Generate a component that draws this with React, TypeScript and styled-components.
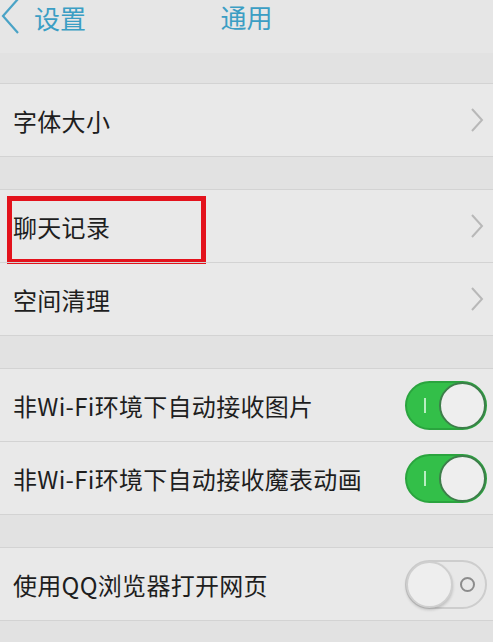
import React from "react";
import styled, { createGlobalStyle } from "styled-components";

const GlobalStyle = createGlobalStyle`
  html, body { margin: 0; padding: 0; background: #e2e2e2; }
  body { font-family: "Noto Sans CJK SC", "Noto Sans", "Liberation Sans", sans-serif; }
`;

const Page = styled.div`
  width: 493px;
  height: 642px;
  overflow: hidden;
  background: #e2e2e2;
  display: flex;
  flex-direction: column;
`;

const Header = styled.header`
  height: 53px;
  background: #e6e6e6;
  display: grid;
  grid-template-columns: 1fr auto 1fr;
  align-items: start;
  flex-shrink: 0;
`;

const BackButton = styled.div`
  display: flex;
  align-items: center;
  gap: 12px;
  color: #3b9ec4;
  font-size: 26px;
  line-height: 30px;
  padding-top: 2px;
`;

const Title = styled.div`
  color: #3b9ec4;
  font-size: 26px;
  line-height: 30px;
  padding-top: 2px;
`;

const Gap = styled.div<{ $h: number }>`
  height: ${(p) => p.$h}px;
  flex-shrink: 0;
`;

const Group = styled.section`
  background: #e9e9e9;
  border-top: 1px solid #d3d3d3;
  border-bottom: 1px solid #d3d3d3;
  display: flex;
  flex-direction: column;
  flex-shrink: 0;
`;

const Row = styled.div`
  position: relative;
  height: 72px;
  display: flex;
  align-items: center;
  justify-content: space-between;
  padding: 0 6px 0 13px;
  & + & {
    border-top: 1px solid #d3d3d3;
  }
`;

const Label = styled.span`
  font-size: 24px;
  color: #1e1e1e;
  letter-spacing: 0.3px;
  padding-top: 1px;
`;

const Highlight = styled.div`
  position: absolute;
  left: 7px;
  top: 6px;
  width: 189px;
  height: 58px;
  border: 5px solid #e3121c;
  pointer-events: none;
`;

const Track = styled.div<{ $on: boolean }>`
  position: relative;
  width: 82px;
  height: 49px;
  box-sizing: border-box;
  border-radius: 25px;
  background: ${(p) => (p.$on ? "#33bf49" : "#e8e8e8")};
  border: 2px solid ${(p) => (p.$on ? "#2aa43e" : "#cdcdcd")};
`;

const Knob = styled.div<{ $on: boolean }>`
  position: absolute;
  top: -1px;
  ${(p) => (p.$on ? "right: -1px;" : "left: -1px;")}
  width: 47px;
  height: 47px;
  box-sizing: border-box;
  border-radius: 50%;
  background: #eeeeee;
  border: 2px solid ${(p) => (p.$on ? "#3d7e4a" : "#cfcfcf")};
  box-shadow: ${(p) => (p.$on ? "none" : "0 2px 3px rgba(0,0,0,0.18)")};
`;

const OnMark = styled.div`
  position: absolute;
  left: 17px;
  top: 15px;
  width: 2px;
  height: 15px;
  background: #b9eec2;
`;

const OffMark = styled.div`
  position: absolute;
  right: 10px;
  top: 15px;
  width: 15px;
  height: 15px;
  box-sizing: border-box;
  border-radius: 50%;
  border: 2px solid #8c8c8c;
`;

const Chevron = () => (
  <svg width="16" height="26" viewBox="0 0 16 26" style={{ marginRight: 2 }}>
    <polyline points="3,2 13,13 3,24" fill="none" stroke="#b8b8b8" strokeWidth="2" />
  </svg>
);

const BackIcon = () => (
  <svg width="22" height="36" viewBox="0 0 22 36" style={{ marginTop: -4 }}>
    <polyline points="18,1 3,18 18,35" fill="none" stroke="#4aa3c6" strokeWidth="2.2" />
  </svg>
);

const Toggle = ({ on }: { on: boolean }) => (
  <Track $on={on}>
    {on ? <OnMark /> : <OffMark />}
    <Knob $on={on} />
  </Track>
);

export default function App() {
  return (
    <>
      <GlobalStyle />
      <Page>
        <Header>
          <BackButton>
            <BackIcon />
            <span>设置</span>
          </BackButton>
          <Title>通用</Title>
          <div />
        </Header>
        <Gap $h={30} />
        <Group>
          <Row>
            <Label>字体大小</Label>
            <Chevron />
          </Row>
        </Group>
        <Gap $h={32} />
        <Group>
          <Row>
            <Label>聊天记录</Label>
            <Chevron />
            <Highlight />
          </Row>
          <Row>
            <Label>空间清理</Label>
            <Chevron />
          </Row>
        </Group>
        <Gap $h={32} />
        <Group>
          <Row>
            <Label>非Wi-Fi环境下自动接收图片</Label>
            <Toggle on />
          </Row>
          <Row>
            <Label>非Wi-Fi环境下自动接收魔表动画</Label>
            <Toggle on />
          </Row>
        </Group>
        <Gap $h={32} />
        <Group>
          <Row>
            <Label>使用QQ浏览器打开网页</Label>
            <Toggle on={false} />
          </Row>
        </Group>
      </Page>
    </>
  );
}
